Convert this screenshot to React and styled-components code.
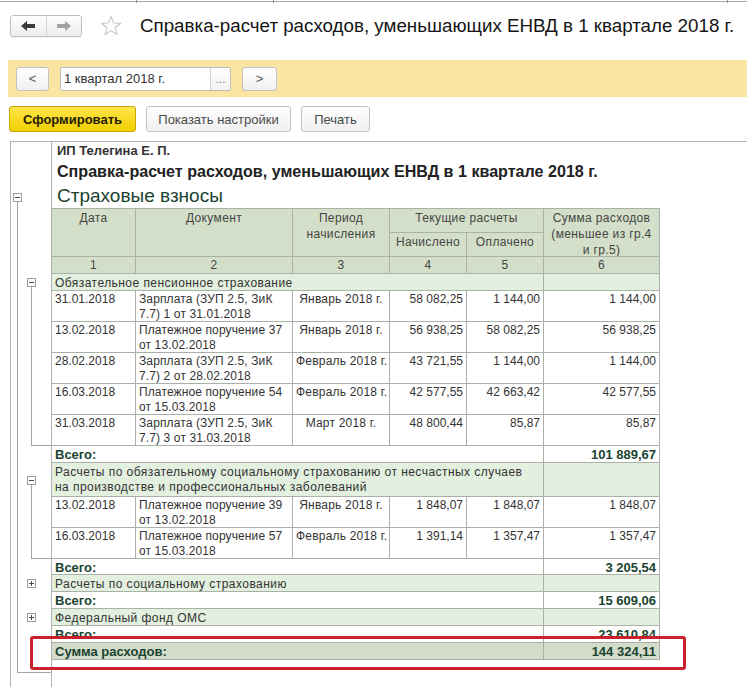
import React from 'react';
import styled, { createGlobalStyle } from 'styled-components';

const GlobalStyle = createGlobalStyle`
  html, body { margin: 0; padding: 0; background: #fff; }
  body { overflow: hidden; font-family: "Liberation Sans", Arial, sans-serif; }
  * { box-sizing: border-box; }
`;

const GRID = '#aab1a7';
const GREEN = '#1a4330';
const RULE = '#b3b3b3';

const Page = styled.div`
  width: 747px;
  height: 687px;
  overflow: hidden;
  background: #fff;
  font-family: "Liberation Sans", Arial, sans-serif;
  color: #333;
`;

const TabStrip = styled.div`
  display: flex;
  height: 2px;
  border-bottom: 1px solid #a9a9a9;
`;

const Tab = styled.div`
  flex: none;
  width: ${p => p.$w}px;
  height: 3px;
  border-right: 1px solid #8f8f8f;
`;

const Header = styled.div`
  display: flex;
  align-items: center;
  height: 22px;
  margin: 13px 0 0 10px;
`;

const NavGroup = styled.div`
  display: flex;
  width: 72px;
  height: 22px;
  border: 1px solid #bfbfbf;
  border-radius: 3px;
  background: linear-gradient(#ffffff, #ececec);
  box-shadow: 0 1px 1px rgba(0, 0, 0, 0.06);
`;

const NavButton = styled.div`
  flex: 1;
  display: flex;
  align-items: center;
  justify-content: center;
  & + & { border-left: 1px solid #d2d2d2; }
`;

const StarBox = styled.div`
  display: flex;
  margin-left: 18px;
`;

const Title = styled.div`
  margin-left: 18px;
  font-size: 18.75px;
  color: #151515;
  white-space: nowrap;
`;

const FilterBar = styled.div`
  display: flex;
  align-items: center;
  gap: 11px;
  height: 37px;
  margin: 23px 0 0 8px;
  padding-left: 8px;
  background: #fae5a3;
`;

const StepButton = styled.div`
  width: ${p => p.$w}px;
  height: 24px;
  display: flex;
  align-items: center;
  justify-content: center;
  border: 1px solid #c2c2c2;
  border-radius: 3px;
  background: linear-gradient(#ffffff, #f0f0f0);
  color: #555;
  font-size: 13px;
`;

const PeriodField = styled.div`
  display: flex;
  width: 171px;
  height: 24px;
  border: 1px solid #bdbdbd;
  border-radius: 2px;
  background: #fff;
  overflow: hidden;
`;

const PeriodText = styled.div`
  flex: 1;
  padding-left: 3px;
  font-size: 13px;
  line-height: 22px;
  color: #333;
`;

const PeriodPick = styled.div`
  width: 20px;
  border-left: 1px solid #cfcfcf;
  background: linear-gradient(#ffffff, #f2f2f2);
  color: #8a8a8a;
  font-size: 12px;
  line-height: 22px;
  text-align: center;
`;

const Commands = styled.div`
  display: flex;
  gap: 10px;
  height: 26px;
  margin: 9px 0 0 9px;
`;

const CmdButton = styled.div`
  width: ${p => p.$w}px;
  height: 26px;
  display: flex;
  align-items: center;
  justify-content: center;
  border: 1px solid ${p => (p.$primary ? '#c9a500' : '#c4c4c4')};
  border-radius: 3px;
  background: ${p => (p.$primary ? 'linear-gradient(#fde64a, #f1cf00)' : 'linear-gradient(#ffffff, #efefef)')};
  font-size: 13px;
  font-weight: ${p => (p.$primary ? 700 : 400)};
  color: ${p => (p.$primary ? '#262000' : '#4a4a4a')};
  white-space: nowrap;
`;

const Report = styled.div`
  position: relative;
  display: grid;
  grid-template-columns: 14px 26px 1px 84px 157px 97px 77px 77px 116px 1fr;
  grid-template-rows: ${p => p.$rows};
  margin: 9px 0 0 10px;
  border-top: 1px solid ${RULE};
  border-left: 1px solid ${RULE};
`;

const GutterRule = styled.div`
  grid-column: 3;
  grid-row: 1 / -1;
  background: ${RULE};
`;

const Company = styled.div`
  grid-column: 4 / -1;
  grid-row: 1;
  padding-left: 5px;
  font-size: 13px;
  font-weight: 700;
  line-height: 18px;
  color: #333;
  white-space: nowrap;
`;

const ReportTitle = styled.div`
  grid-column: 4 / -1;
  grid-row: 2;
  padding-left: 5px;
  font-size: 16.1px;
  font-weight: 700;
  line-height: 22px;
  color: #222;
  white-space: nowrap;
`;

const SectionTitle = styled.div`
  grid-column: 4 / -1;
  grid-row: 3;
  padding-left: 5px;
  font-size: 19px;
  line-height: 24px;
  color: ${GREEN};
`;

const Cell = styled.div`
  grid-column: ${p => p.$c};
  grid-row: ${p => p.$r};
  padding: ${p => (p.$pt ?? 1)}px 3px 0;
  border-right: 1px solid ${GRID};
  border-bottom: 1px solid ${GRID};
  background: #fff;
  font-size: 12px;
  line-height: 15px;
  color: #333;
  letter-spacing: ${p => (p.$ls || 0)}px;
  text-align: ${p => p.$align || 'left'};
  white-space: nowrap;
  overflow: hidden;
`;

const HeadCell = styled(Cell)`
  background: #d4dfca;
  color: #454545;
  text-align: center;
  letter-spacing: 0.35px;
  line-height: ${p => (p.$lh || 16)}px;
  border-top: ${p => (p.$top ? `1px solid ${GRID}` : 'none')};
`;

const GroupCell = styled(Cell)`
  background: #e3efdf;
  letter-spacing: 0.45px;
`;

const TotalCell = styled(Cell)`
  font-size: 13px;
  font-weight: 700;
  color: ${GREEN};
`;

const GrandCell = styled(TotalCell)`
  background: #d3dbca;
`;

const Bracket = styled.div`
  grid-column: ${p => p.$c};
  grid-row: ${p => p.$r};
  display: flex;
  flex-direction: column;
  align-items: flex-start;
  padding: ${p => p.$top}px 0 0 2px;
  z-index: 1;
`;

const Toggle = styled.div`
  flex: none;
  width: 9px;
  height: 9px;
  border: 1px solid #9c9c9c;
  background: #fff;
  display: flex;
`;

const BracketLine = styled.div`
  flex: 1;
  align-self: stretch;
  margin-left: 4px;
  border-left: 1px solid #a4a4a4;
  border-bottom: 1px solid #a4a4a4;
`;

const Highlight = styled.div`
  position: absolute;
  left: 19px;
  top: 494px;
  width: 656px;
  height: 34px;
  border: 3px solid #c8232c;
  border-radius: 3px;
  pointer-events: none;
  z-index: 2;
`;

const Arrow = ({ dir, color }) => (
  <svg width="14" height="10" viewBox="0 0 14 10">
    <path
      d="M0 5 L6 0 L6 3 L14 3 L14 7 L6 7 L6 10 Z"
      fill={color}
      transform={dir === 'right' ? 'translate(14 0) scale(-1 1)' : undefined}
    />
  </svg>
);

const Star = () => (
  <svg width="22" height="22" viewBox="0 0 24 24">
    <path
      d="M12 1.5 L14.8 8.6 L22.4 9 L16.5 13.9 L18.5 21.3 L12 17.1 L5.5 21.3 L7.5 13.9 L1.6 9 L9.2 8.6 Z"
      fill="#fdfdfd"
      stroke="#c2c2c2"
      strokeWidth="1.1"
      strokeLinejoin="round"
    />
  </svg>
);

const ToggleIcon = ({ open }) => (
  <svg width="7" height="7" viewBox="0 0 7 7">
    <path d="M1 3.5 H6" stroke="#4a4a4a" strokeWidth="1" />
    {!open && <path d="M3.5 1 V6" stroke="#4a4a4a" strokeWidth="1" />}
  </svg>
);

const Lines = ({ text }) =>
  (Array.isArray(text) ? text : [text]).map((l, i) => (
    <React.Fragment key={i}>
      {i > 0 && <br />}
      {l}
    </React.Fragment>
  ));

const C = {
  date: '4 / 5',
  doc: '5 / 6',
  period: '6 / 7',
  nach: '7 / 8',
  opl: '8 / 9',
  sum: '9 / 10',
  merged: '4 / 9',
};

const groups = [
  {
    title: 'Обязательное пенсионное страхование',
    open: true,
    rows: [
      ['31.01.2018', ['Зарплата (ЗУП 2.5, ЗиК', '7.7) 1 от 31.01.2018'], 'Январь 2018 г.', '58 082,25', '1 144,00', '1 144,00'],
      ['13.02.2018', ['Платежное поручение 37', 'от 13.02.2018'], 'Январь 2018 г.', '56 938,25', '58 082,25', '56 938,25'],
      ['28.02.2018', ['Зарплата (ЗУП 2.5, ЗиК', '7.7) 2 от 28.02.2018'], 'Февраль 2018 г.', '43 721,55', '1 144,00', '1 144,00'],
      ['16.03.2018', ['Платежное поручение 54', 'от 15.03.2018'], 'Февраль 2018 г.', '42 577,55', '42 663,42', '42 577,55'],
      ['31.03.2018', ['Зарплата (ЗУП 2.5, ЗиК', '7.7) 3 от 31.03.2018'], 'Март 2018 г.', '48 800,44', '85,87', '85,87'],
    ],
    total: '101 889,67',
    totalH: 17,
  },
  {
    title: [
      'Расчеты по обязательному социальному страхованию от несчастных случаев',
      'на производстве и профессиональных заболеваний',
    ],
    open: true,
    rows: [
      ['13.02.2018', ['Платежное поручение 39', 'от 13.02.2018'], 'Январь 2018 г.', '1 848,07', '1 848,07', '1 848,07'],
      ['16.03.2018', ['Платежное поручение 57', 'от 15.03.2018'], 'Февраль 2018 г.', '1 391,14', '1 357,47', '1 357,47'],
    ],
    total: '3 205,54',
    totalH: 16,
  },
  { title: 'Расчеты по социальному страхованию', open: false, rows: [], total: '15 609,06', totalH: 17 },
  { title: 'Федеральный фонд ОМС', open: false, rows: [], total: '23 610,84', totalH: 17 },
];

function buildSheet() {
  const heights = [18, 24, 24, 25, 24, 17];
  const items = [];
  let r = 7;
  groups.forEach((g, gi) => {
    const multi = Array.isArray(g.title);
    const headH = multi ? 34 : 17;
    const start = r;
    heights.push(headH);
    items.push(
      <GroupCell key={`g${gi}`} $c={C.merged} $r={r} $pt={2}>
        <Lines text={g.title} />
      </GroupCell>,
      <GroupCell key={`gs${gi}`} $c={C.sum} $r={r} />
    );
    r += 1;
    g.rows.forEach((row, ri) => {
      heights.push(31);
      const [date, doc, period, nach, opl, sum] = row;
      items.push(
        <Cell key={`d${gi}-${ri}-1`} $c={C.date} $r={r}>{date}</Cell>,
        <Cell key={`d${gi}-${ri}-2`} $c={C.doc} $r={r} $ls={0.12}><Lines text={doc} /></Cell>,
        <Cell key={`d${gi}-${ri}-3`} $c={C.period} $r={r} $ls={0.2} $align="center">{period}</Cell>,
        <Cell key={`d${gi}-${ri}-4`} $c={C.nach} $r={r} $align="right">{nach}</Cell>,
        <Cell key={`d${gi}-${ri}-5`} $c={C.opl} $r={r} $align="right">{opl}</Cell>,
        <Cell key={`d${gi}-${ri}-6`} $c={C.sum} $r={r} $align="right">{sum}</Cell>
      );
      r += 1;
    });
    items.push(
      <Bracket key={`b${gi}`} $c="2 / 3" $r={`${start} / ${r}`} $top={Math.round((headH - 9) / 2)}>
        <Toggle><ToggleIcon open={g.open} /></Toggle>
        {g.open && <BracketLine />}
      </Bracket>
    );
    heights.push(g.totalH);
    items.push(
      <TotalCell key={`t${gi}`} $c={C.merged} $r={r}>Всего:</TotalCell>,
      <TotalCell key={`tv${gi}`} $c={C.sum} $r={r} $align="right">{g.total}</TotalCell>
    );
    r += 1;
  });
  heights.push(17);
  items.push(
    <GrandCell key="grand" $c={C.merged} $r={r}>Сумма расходов:</GrandCell>,
    <GrandCell key="grandv" $c={C.sum} $r={r} $align="right">144 324,11</GrandCell>
  );
  r += 1;
  heights.push(13);
  const blank = r;
  r += 1;
  heights.push(40);
  items.push(
    <Bracket key="outer" $c="1 / 3" $r={`3 / ${blank + 1}`} $top={9}>
      <Toggle><ToggleIcon open /></Toggle>
      <BracketLine />
    </Bracket>
  );
  return { items, rows: heights.map(h => `${h}px`).join(' ') };
}

export default function App() {
  const { items, rows } = buildSheet();
  return (
    <Page>
      <GlobalStyle />
      <TabStrip>
        <Tab $w={137} />
        <Tab $w={137} />
        <Tab $w={454} />
      </TabStrip>
      <Header>
        <NavGroup>
          <NavButton><Arrow dir="left" color="#3a3a3a" /></NavButton>
          <NavButton><Arrow dir="right" color="#a2a2a2" /></NavButton>
        </NavGroup>
        <StarBox><Star /></StarBox>
        <Title>Справка-расчет расходов, уменьшающих ЕНВД в 1 квартале 2018 г.</Title>
      </Header>
      <FilterBar>
        <StepButton $w={33}>&lt;</StepButton>
        <PeriodField>
          <PeriodText>1 квартал 2018 г.</PeriodText>
          <PeriodPick>...</PeriodPick>
        </PeriodField>
        <StepButton $w={35}>&gt;</StepButton>
      </FilterBar>
      <Commands>
        <CmdButton $w={127} $primary>Сформировать</CmdButton>
        <CmdButton $w={145}>Показать настройки</CmdButton>
        <CmdButton $w={69}>Печать</CmdButton>
      </Commands>
      <Report $rows={rows}>
        <GutterRule />
        <Company>ИП Телегина Е. П.</Company>
        <ReportTitle>Справка-расчет расходов, уменьшающих ЕНВД в 1 квартале 2018 г.</ReportTitle>
        <SectionTitle>Страховые взносы</SectionTitle>
        <HeadCell $c={C.date} $r="4 / 6" $top>Дата</HeadCell>
        <HeadCell $c={C.doc} $r="4 / 6" $top>Документ</HeadCell>
        <HeadCell $c={C.period} $r="4 / 6" $top>Период<br />начисления</HeadCell>
        <HeadCell $c="7 / 9" $r={4} $top>Текущие расчеты</HeadCell>
        <HeadCell $c={C.sum} $r="4 / 6" $top>Сумма расходов<br />(меньшее из гр.4<br />и гр.5)</HeadCell>
        <HeadCell $c={C.nach} $r={5}>Начислено</HeadCell>
        <HeadCell $c={C.opl} $r={5}>Оплачено</HeadCell>
        {['1', '2', '3', '4', '5', '6'].map((n, i) => (
          <HeadCell key={n} $c={`${4 + i} / ${5 + i}`} $r={6} $lh={15}>{n}</HeadCell>
        ))}
        {items}
        <Highlight />
      </Report>
    </Page>
  );
}
